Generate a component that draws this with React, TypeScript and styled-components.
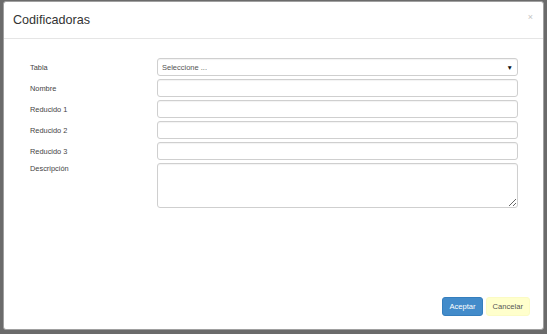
import React from "react";
import styled, { createGlobalStyle } from "styled-components";

const GlobalStyle = createGlobalStyle`
  html, body {
    margin: 0;
    padding: 0;
    background: #6b6b6b;
    font-family: "Liberation Sans", Arial, sans-serif;
    -webkit-font-smoothing: antialiased;
  }
`;

const Backdrop = styled.div`
  width: 547px;
  height: 334px;
  padding: 1px 0 0 3px;
  box-sizing: border-box;
`;

const Modal = styled.div`
  width: 541px;
  height: 329px;
  box-sizing: border-box;
  background: #fff;
  border: 1px solid #a0a0a0;
  border-radius: 3px;
  display: flex;
  flex-direction: column;
`;

const Header = styled.div`
  height: 37px;
  box-sizing: border-box;
  padding: 0 10px 0 9px;
  border-bottom: 1px solid #e5e5e5;
  display: flex;
  align-items: center;
  justify-content: space-between;
`;

const Title = styled.h4`
  margin: 0;
  font-size: 12.6px;
  font-weight: normal;
  color: #333;
  padding-bottom: 1px;
`;

const Close = styled.button`
  border: 0;
  background: none;
  padding: 0;
  font-size: 9px;
  line-height: 1;
  color: #c4c4c4;
  margin-top: -6px;
  cursor: pointer;
`;

const Body = styled.div`
  flex: 1;
  padding: 19px 25px 0 26px;
  display: flex;
  flex-direction: column;
  gap: 3px;
`;

const Row = styled.div<{ $top?: boolean }>`
  display: grid;
  grid-template-columns: 127px 1fr;
  align-items: ${(p) => (p.$top ? "start" : "center")};
`;

const Label = styled.label<{ $top?: boolean }>`
  font-size: 7.4px;
  color: #444;
  padding-top: ${(p) => (p.$top ? "1px" : "0")};
`;

const fieldBase = `
  box-sizing: border-box;
  width: 100%;
  border: 1px solid #cfcfcf;
  border-radius: 3px;
  background: #fff;
  box-shadow: inset 0 1px 1px rgba(0, 0, 0, 0.05);
  font-family: "Liberation Sans", Arial, sans-serif;
  font-size: 7.5px;
  color: #555;
  outline: none;
`;

const Input = styled.input`
  ${fieldBase}
  height: 18px;
  padding: 0 5px;
`;

const Select = styled.div`
  ${fieldBase}
  height: 18px;
  padding: 0 4px;
  display: flex;
  align-items: center;
  justify-content: space-between;
`;

const Arrow = styled.span`
  font-size: 6.5px;
  color: #111;
`;

const TextArea = styled.textarea`
  ${fieldBase}
  height: 45px;
  padding: 3px 5px;
  resize: vertical;
  display: block;
`;

const Footer = styled.div`
  display: flex;
  justify-content: flex-end;
  gap: 3px;
  padding: 0 13px 13px 0;
`;

const Button = styled.button<{ $primary?: boolean }>`
  height: 19px;
  box-sizing: border-box;
  padding: 0 6px;
  border-radius: 3px;
  font-family: "Liberation Sans", Arial, sans-serif;
  font-size: 7.6px;
  border: 1px solid ${(p) => (p.$primary ? "#357ebd" : "#fbfbc4")};
  background: ${(p) => (p.$primary ? "#428bca" : "#ffffcc")};
  color: ${(p) => (p.$primary ? "#fff" : "#555")};
  cursor: pointer;
`;

const fields = ["Nombre", "Reducido 1", "Reducido 2", "Reducido 3"];

const App = () => {
  return (
    <Backdrop>
      <GlobalStyle />
      <Modal>
        <Header>
          <Title>Codificadoras</Title>
          <Close>×</Close>
        </Header>
        <Body>
          <Row>
            <Label>Tabla</Label>
            <Select>
              <span>Seleccione ...</span>
              <Arrow>▼</Arrow>
            </Select>
          </Row>
          {fields.map((f) => (
            <Row key={f}>
              <Label>{f}</Label>
              <Input />
            </Row>
          ))}
          <Row $top>
            <Label $top>Descripción</Label>
            <TextArea />
          </Row>
        </Body>
        <Footer>
          <Button $primary>Aceptar</Button>
          <Button>Cancelar</Button>
        </Footer>
      </Modal>
    </Backdrop>
  );
};

export default App;
